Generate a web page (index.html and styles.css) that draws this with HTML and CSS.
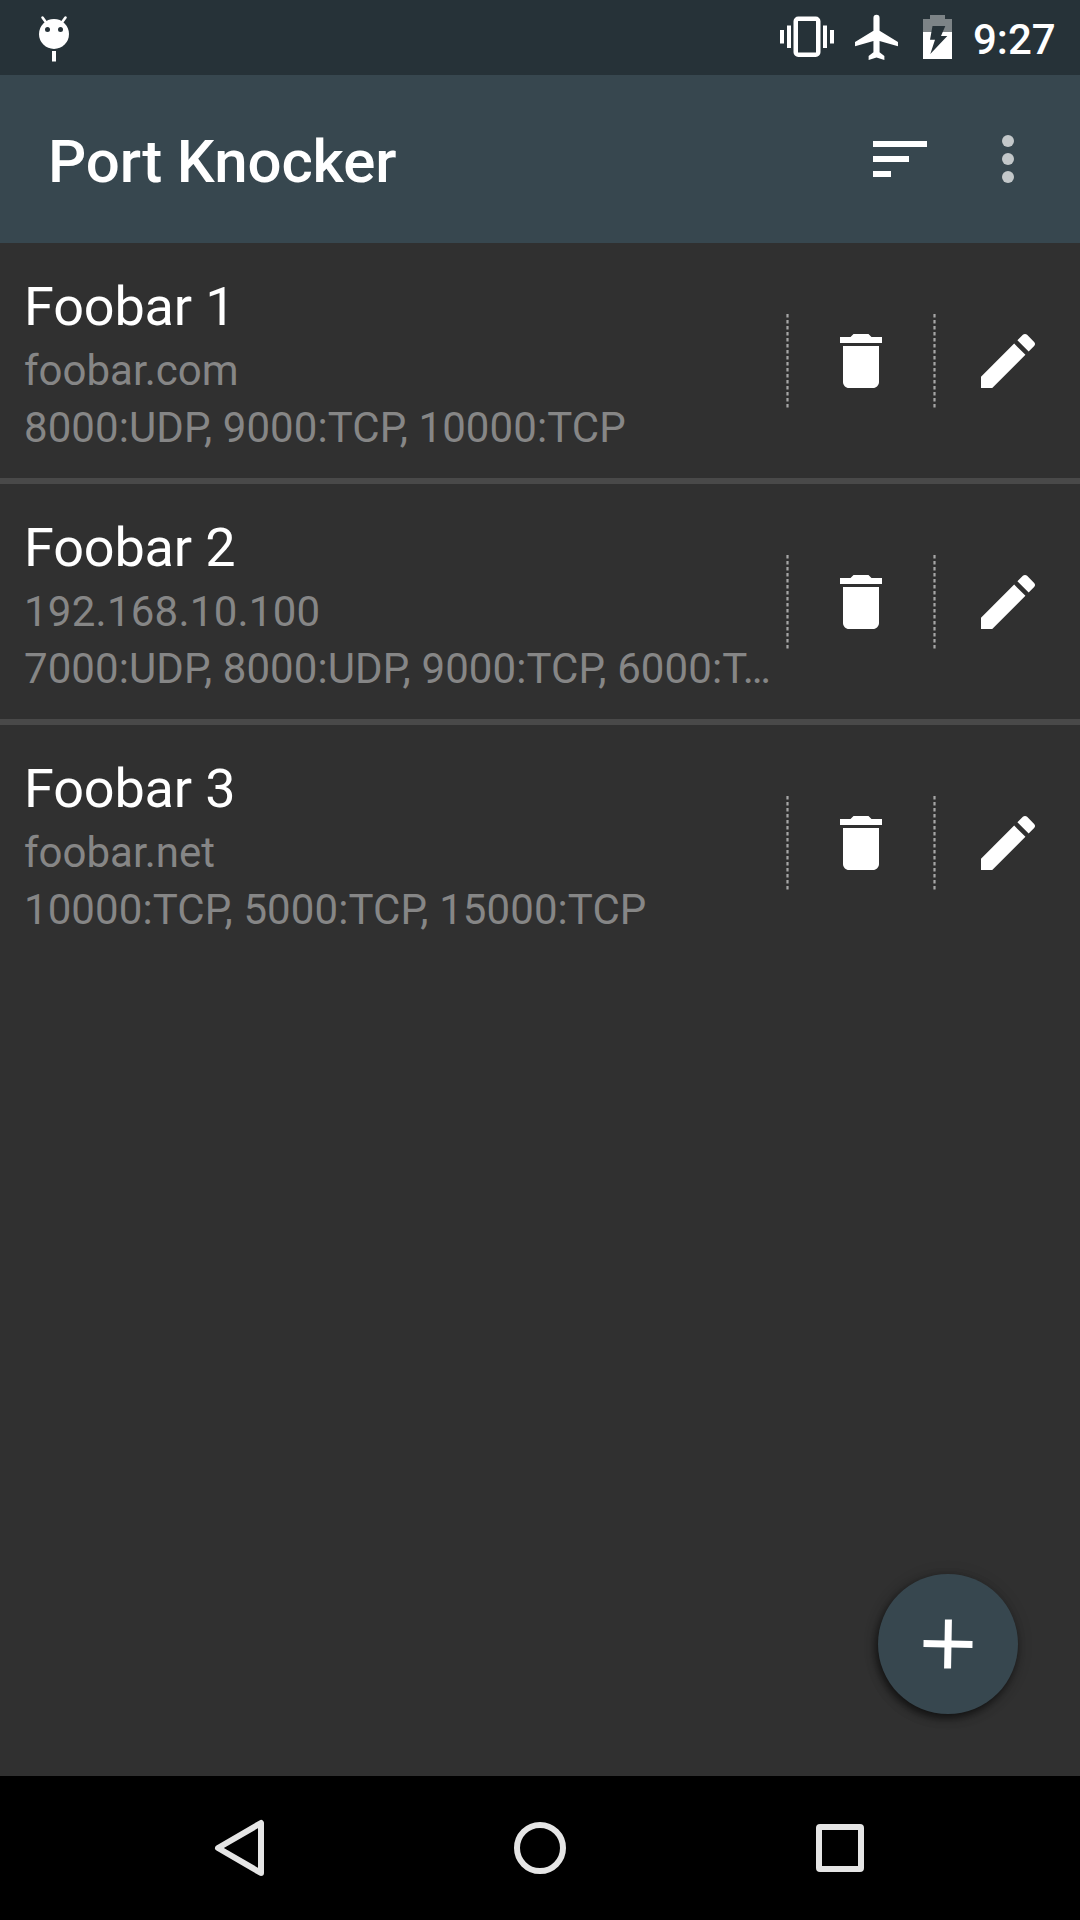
FILE: index.html
```html
<!DOCTYPE html>
<html lang="en">
<head>
<meta charset="utf-8">
<title>Port Knocker</title>
<link rel="stylesheet" href="styles.css">
</head>
<body>
<svg class="defs" width="0" height="0">
  <symbol id="trash" viewBox="0 0 24 24"><path d="M6 19c0 1.100.9 2 2 2h8c1.100 0 2-.9 2-2V7H6v12zM19 4h-3.500l-1-1h-5l-1 1H5v2h14V4z"/></symbol>
  <symbol id="pencil" viewBox="0 0 24 24"><path d="M3 17.250V21h3.750L17.810 9.940l-3.750-3.750L3 17.250zM20.710 7.040c.39-.39.39-1.020 0-1.410l-2.340-2.340c-.39-.39-1.020-.39-1.410 0l-1.830 1.830 3.750 3.750 1.830-1.830z"/></symbol>
  <symbol id="dots" viewBox="0 0 3 95"><path d="M1.500 1v94" stroke="#a6a6a6" stroke-width="2.200" stroke-dasharray="3.400 2.600"/></symbol>
</svg>
<div class="screen">
  <header class="status">
    <svg class="debug" viewBox="0 0 36 48"><g fill="#fff"><circle cx="18" cy="19" r="15"/><path d="M16 36h4v10.500h-4z"/></g><path d="M10.500 8L6.500 2.500M25.500 8l4-5.500" stroke="#fff" stroke-width="2.600" stroke-linecap="round"/><g fill="#263238"><circle cx="11.500" cy="14.500" r="2.500"/><circle cx="24.500" cy="14.500" r="2.500"/></g></svg>
    <div class="status-right">
      <svg class="vibrate" viewBox="0 0 54 42"><path fill="#fff" d="M0 14h4v13.500H0zM7 9.500h4v22.500H7zM43 9.500h4v22.500h-4zM50 14h4v13.500h-4z"/><rect x="15.750" y="2.750" width="22.500" height="36" rx="2.500" fill="none" stroke="#fff" stroke-width="4.500"/></svg>
      <svg class="plane" viewBox="0 0 42 45"><path fill="#fff" d="M42 31.500v-4.200L24 16.500V3.800a3 3 0 0 0-6 0v12.700L0 27.300v4.200l18-5.100v11.100l-4.700 3.600v3.900l7.700-2.400 7.700 2.400v-3.900L24 37.500V26.400z"/></svg>
      <svg class="battery" viewBox="0 0 29 44"><path fill="#7d8487" d="M7 0h15v4h7v13H0V4h7z"/><path fill="#fff" d="M0 17h29v27H0z"/><path fill="#263238" d="M9.500 11h12.800L18 21h6.300l-17 18 4.700-14.300H7z"/></svg>
      <span class="clock">9:27</span>
    </div>
  </header>
  <div class="appbar">
    <h1>Port Knocker</h1>
    <svg class="icon" viewBox="0 0 24 24"><path d="M3 18h6v-2H3v2zM3 6v2h18V6H3zm0 7h12v-2H3v2z"/></svg>
    <svg class="icon overflow" viewBox="0 0 24 24"><circle cx="12" cy="6" r="2"/><circle cx="12" cy="12" r="2"/><circle cx="12" cy="18" r="2"/></svg>
  </div>
  <main class="list">
    <div class="row">
      <div class="info"><div class="name">Foobar 1</div><div class="sub">foobar.com</div><div class="sub ports">8000:UDP, 9000:TCP, 10000:TCP</div></div>
      <svg class="rule"><use href="#dots"/></svg><div class="action"><svg class="icon"><use href="#trash"/></svg></div>
      <svg class="rule"><use href="#dots"/></svg><div class="action"><svg class="icon"><use href="#pencil"/></svg></div>
    </div>
    <div class="row">
      <div class="info"><div class="name">Foobar 2</div><div class="sub address">192.168.10.100</div><div class="sub ports">7000:UDP, 8000:UDP, 9000:TCP, 6000:T…</div></div>
      <svg class="rule"><use href="#dots"/></svg><div class="action"><svg class="icon"><use href="#trash"/></svg></div>
      <svg class="rule"><use href="#dots"/></svg><div class="action"><svg class="icon"><use href="#pencil"/></svg></div>
    </div>
    <div class="row">
      <div class="info"><div class="name">Foobar 3</div><div class="sub">foobar.net</div><div class="sub ports">10000:TCP, 5000:TCP, 15000:TCP</div></div>
      <svg class="rule"><use href="#dots"/></svg><div class="action"><svg class="icon"><use href="#trash"/></svg></div>
      <svg class="rule"><use href="#dots"/></svg><div class="action"><svg class="icon"><use href="#pencil"/></svg></div>
    </div>
    <div class="fab"><svg viewBox="0 0 24 24"><path d="M19 13h-6v6h-2v-6H5v-2h6V5h2v6h6v2z"/></svg></div>
  </main>
  <nav class="nav">
    <svg viewBox="0 0 60 60"><path d="M51 5v50L8 30z"/></svg>
    <svg viewBox="0 0 60 60"><circle cx="30" cy="30" r="23"/></svg>
    <svg viewBox="0 0 60 60"><rect x="9" y="9" width="42" height="42" rx="1"/></svg>
  </nav>
</div>
</body>
</html>
```
FILE: styles.css
```css
body { margin: 0; font-family: Roboto, sans-serif; color: #fff; background: #303030; }
svg { display: block; flex: none; }
.defs { position: absolute; }
.screen { display: flex; flex-direction: column; width: 1080px; height: 1920px; }
.status { display: flex; justify-content: space-between; height: 75px; background: #263238; }
.debug { width: 36px; height: 48px; margin: 15px 0 0 36px; }
.status-right { display: flex; padding-right: 24px; }
.vibrate { width: 54px; height: 42px; margin-top: 16px; }
.plane { width: 43px; height: 46px; margin: 14px 0 0 21px; }
.battery { width: 29px; height: 44px; margin: 15px 0 0 25px; }
.clock { width: 83px; margin-left: 21px; font-size: 42px; font-weight: 500; line-height: 79px; white-space: nowrap; }
.appbar { display: flex; align-items: flex-start; height: 168px; box-sizing: border-box; padding: 48px 36px 0 48px; background: #37474f; }
h1 { flex: 1; margin: 0; font-size: 60px; font-weight: 500; line-height: 77px; letter-spacing: -0.13px; }
.icon { width: 72px; height: 72px; fill: #fff; }
.overflow { margin-left: 36px; fill: #c3c8ca; }
.list { position: relative; flex: 1; }
.row { display: flex; align-items: center; height: 235px; }
.row + .row { border-top: 6px solid #494949; }
.info { width: 762px; padding: 10px 0 0 24px; white-space: nowrap; }
.name { font-size: 54px; line-height: 64px; margin-bottom: 3px; letter-spacing: -0.15px; }
.sub { font-size: 42px; line-height: 57px; color: #868686; }
.address { letter-spacing: 0.25px; }
.ports { letter-spacing: 0.08px; }
.rule { width: 3px; height: 95px; }
.action { display: flex; flex: 1; justify-content: center; }
.fab { position: absolute; right: 62px; bottom: 62px; display: grid; place-items: center; width: 140px; height: 140px; border-radius: 50%; background: #37474f; box-shadow: -2px 4px 9px rgba(0, 0, 0, .6), 0 1px 16px rgba(0, 0, 0, .15); }
.fab svg { width: 84px; height: 84px; fill: #fff; transform: rotate(1deg); }
.nav { display: flex; align-items: center; justify-content: center; gap: 240px; height: 144px; background: #000; }
.nav svg { width: 60px; height: 60px; fill: none; stroke: #e5e5e5; stroke-width: 6; stroke-linejoin: round; }
```
